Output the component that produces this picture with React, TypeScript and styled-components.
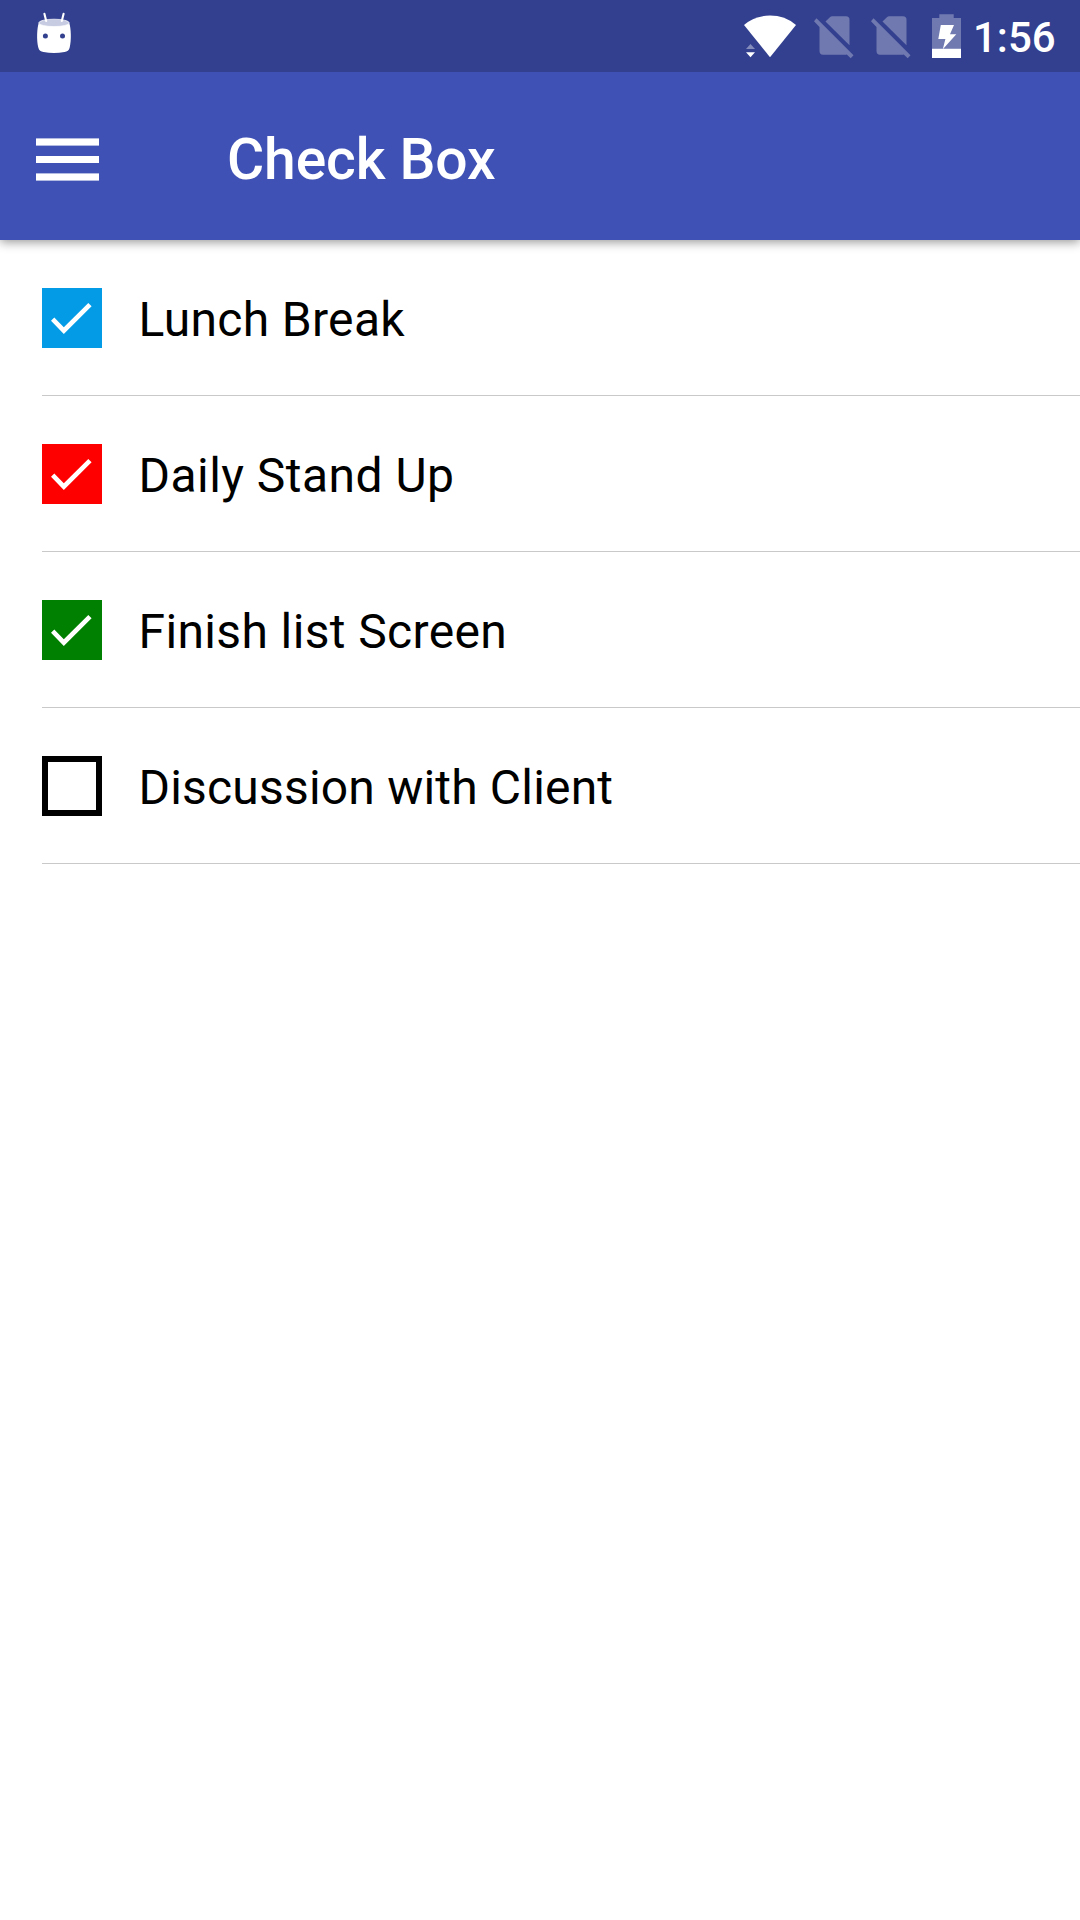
import React, { useState } from "react";
import styled, { createGlobalStyle } from "styled-components";

const GlobalStyle = createGlobalStyle`
  * { box-sizing: border-box; }
  body { margin: 0; background: #fff; font-family: Roboto, "Noto Sans", sans-serif; }
`;

const Screen = styled.div`
  display: flex;
  flex-direction: column;
  width: 1080px;
  height: 1920px;
  background: #fff;
  overflow: hidden;
`;

const StatusBar = styled.div`
  display: flex;
  flex: none;
  height: 72px;
  justify-content: space-between;
  background: #33408f;
  padding: 0 24px 0 36px;
  z-index: 2;
`;

const StatusIcons = styled.div`
  display: flex;
`;

const Glyph = styled.svg<{ $w: number; $gap?: number }>`
  display: block;
  flex: none;
  width: ${(p) => p.$w}px;
  height: 72px;
  margin-right: ${(p) => p.$gap ?? 0}px;
`;

const Clock = styled.span`
  width: 83px;
  font-size: 42px;
  font-weight: 500;
  line-height: 76px;
  color: #fff;
  white-space: nowrap;
`;

const AppBar = styled.header`
  display: flex;
  flex: none;
  align-items: center;
  height: 168px;
  padding: 7px 0 0 36px;
  background: #3f51b5;
  box-shadow: 0 2px 10px rgba(0, 0, 0, 0.42);
  z-index: 1;
`;

const MenuButton = styled.button`
  display: flex;
  padding: 0;
  border: 0;
  background: none;
`;

const Title = styled.h1`
  margin: 0 0 0 128px;
  font-size: 57px;
  font-weight: 500;
  line-height: 68px;
  letter-spacing: -0.1px;
  color: #fff;
  white-space: nowrap;
`;

const List = styled.ul`
  margin: 0;
  padding: 0 0 0 42px;
  list-style: none;
`;

const Row = styled.li`
  display: flex;
  align-items: center;
  height: 156px;
  border-bottom: 1px solid #c9c9c9;
`;

const Box = styled.button<{ $color: string; $checked: boolean }>`
  flex: none;
  width: 60px;
  height: 60px;
  padding: 0;
  border: ${(p) => (p.$checked ? "0" : "6px solid #000")};
  background: ${(p) => (p.$checked ? p.$color : "#fff")};
`;

const Tick = styled.svg`
  display: block;
  width: 60px;
  height: 60px;
`;

const Label = styled.span<{ $spacing: number }>`
  margin-left: 36.5px;
  padding-top: 5px;
  font-size: 48px;
  line-height: 60px;
  letter-spacing: ${(p) => p.$spacing}px;
  color: #000;
  white-space: nowrap;
`;

const NoSim = ({ gap }: { gap: number }) => (
  <Glyph $w={40} $gap={gap} viewBox="0 0 40 72" fill="#fff" fillOpacity={0.3}>
    <path d="M11.5 21.5 16.2 17Q17 16.3 18 16.3H32Q35.5 16.3 35.5 20V45.3Z" />
    <path d="M2.5 18.3 39.5 55.3 36.7 58.2 32.8 54.4Q32 54.7 31 54.7H9Q5.5 54.7 5.5 51V27L0 21.2Z" />
  </Glyph>
);

const initialItems = [
  { label: "Lunch Break", color: "#039be5", checked: true, spacing: 0.33 },
  { label: "Daily Stand Up", color: "#ff0000", checked: true, spacing: 0.46 },
  { label: "Finish list Screen", color: "#008000", checked: true, spacing: 0.37 },
  { label: "Discussion with Client", color: "#000", checked: false, spacing: 0.19 },
];

export default function App() {
  const [items, setItems] = useState(initialItems);
  const toggle = (index: number) =>
    setItems(items.map((it, i) => (i === index ? { ...it, checked: !it.checked } : it)));

  return (
    <Screen>
      <GlobalStyle />
      <StatusBar>
        <Glyph $w={36} viewBox="0 0 36 72">
          <path d="M2.7 23.2C1 28 .4 40 2.3 47.5 3 50.5 4.8 51.5 7.5 52Q18 53.8 28.5 52C31.2 51.5 33 50.5 33.7 47.5 35.6 40 35 28 33.3 23.2Z" fill="#fff" />
          <ellipse cx="18" cy="22.9" rx="15.3" ry="3.7" fill="#c8cce2" stroke="#fff" strokeWidth=".7" />
          <path d="M8.4 13.8 10.2 21M27.6 13.8 25.8 21" stroke="#fff" strokeWidth="2.1" strokeLinecap="round" />
          <circle cx="9.4" cy="36" r="2.5" fill="#33408f" />
          <circle cx="26.5" cy="36" r="2.5" fill="#33408f" />
        </Glyph>
        <StatusIcons>
          <Glyph $w={52} $gap={18} viewBox="0 0 52 72" fill="#fff">
            <path d="M0 25Q11 15.6 26 15.6T52 25L26 57.2Z" />
            <path d="M2 49 6.5 44 11 49Z" fillOpacity=".4" />
            <path d="M2 52.2H11L6.5 57.2Z" />
          </Glyph>
          <NoSim gap={17} />
          <NoSim gap={21} />
          <Glyph $w={29} $gap={12} viewBox="0 0 29 72" fill="#fff">
            <path d="M0 18H7.3V14.2H21.7V18H29V48.7H0Z" fillOpacity=".3" />
            <path d="M0 48.7H29V58H0Z" />
            <path d="M8.8 25H22L18 34.3H24.3L10.8 49.2 13.4 39H6.3Z" />
          </Glyph>
          <Clock>1:56</Clock>
        </StatusIcons>
      </StatusBar>
      <AppBar>
        <MenuButton aria-label="Menu">
          <svg width="63" height="43" viewBox="0 0 63 43" fill="#fff">
            <rect y=".4" width="63" height="7.2" />
            <rect y="18" width="63" height="7" />
            <rect y="35.4" width="63" height="7.2" />
          </svg>
        </MenuButton>
        <Title>Check Box</Title>
      </AppBar>
      <List>
        {items.map((item, i) => (
          <Row key={item.label}>
            <Box
              $color={item.color}
              $checked={item.checked}
              role="checkbox"
              aria-checked={item.checked}
              aria-label={item.label}
              onClick={() => toggle(i)}
            >
              {item.checked && (
                <Tick viewBox="0 0 60 60">
                  <path d="M9 32.8 12.3 29.6 21.8 39.2 46.3 15 49.6 18.2 21.8 46Z" fill="#fff" />
                </Tick>
              )}
            </Box>
            <Label $spacing={item.spacing}>{item.label}</Label>
          </Row>
        ))}
      </List>
    </Screen>
  );
}
